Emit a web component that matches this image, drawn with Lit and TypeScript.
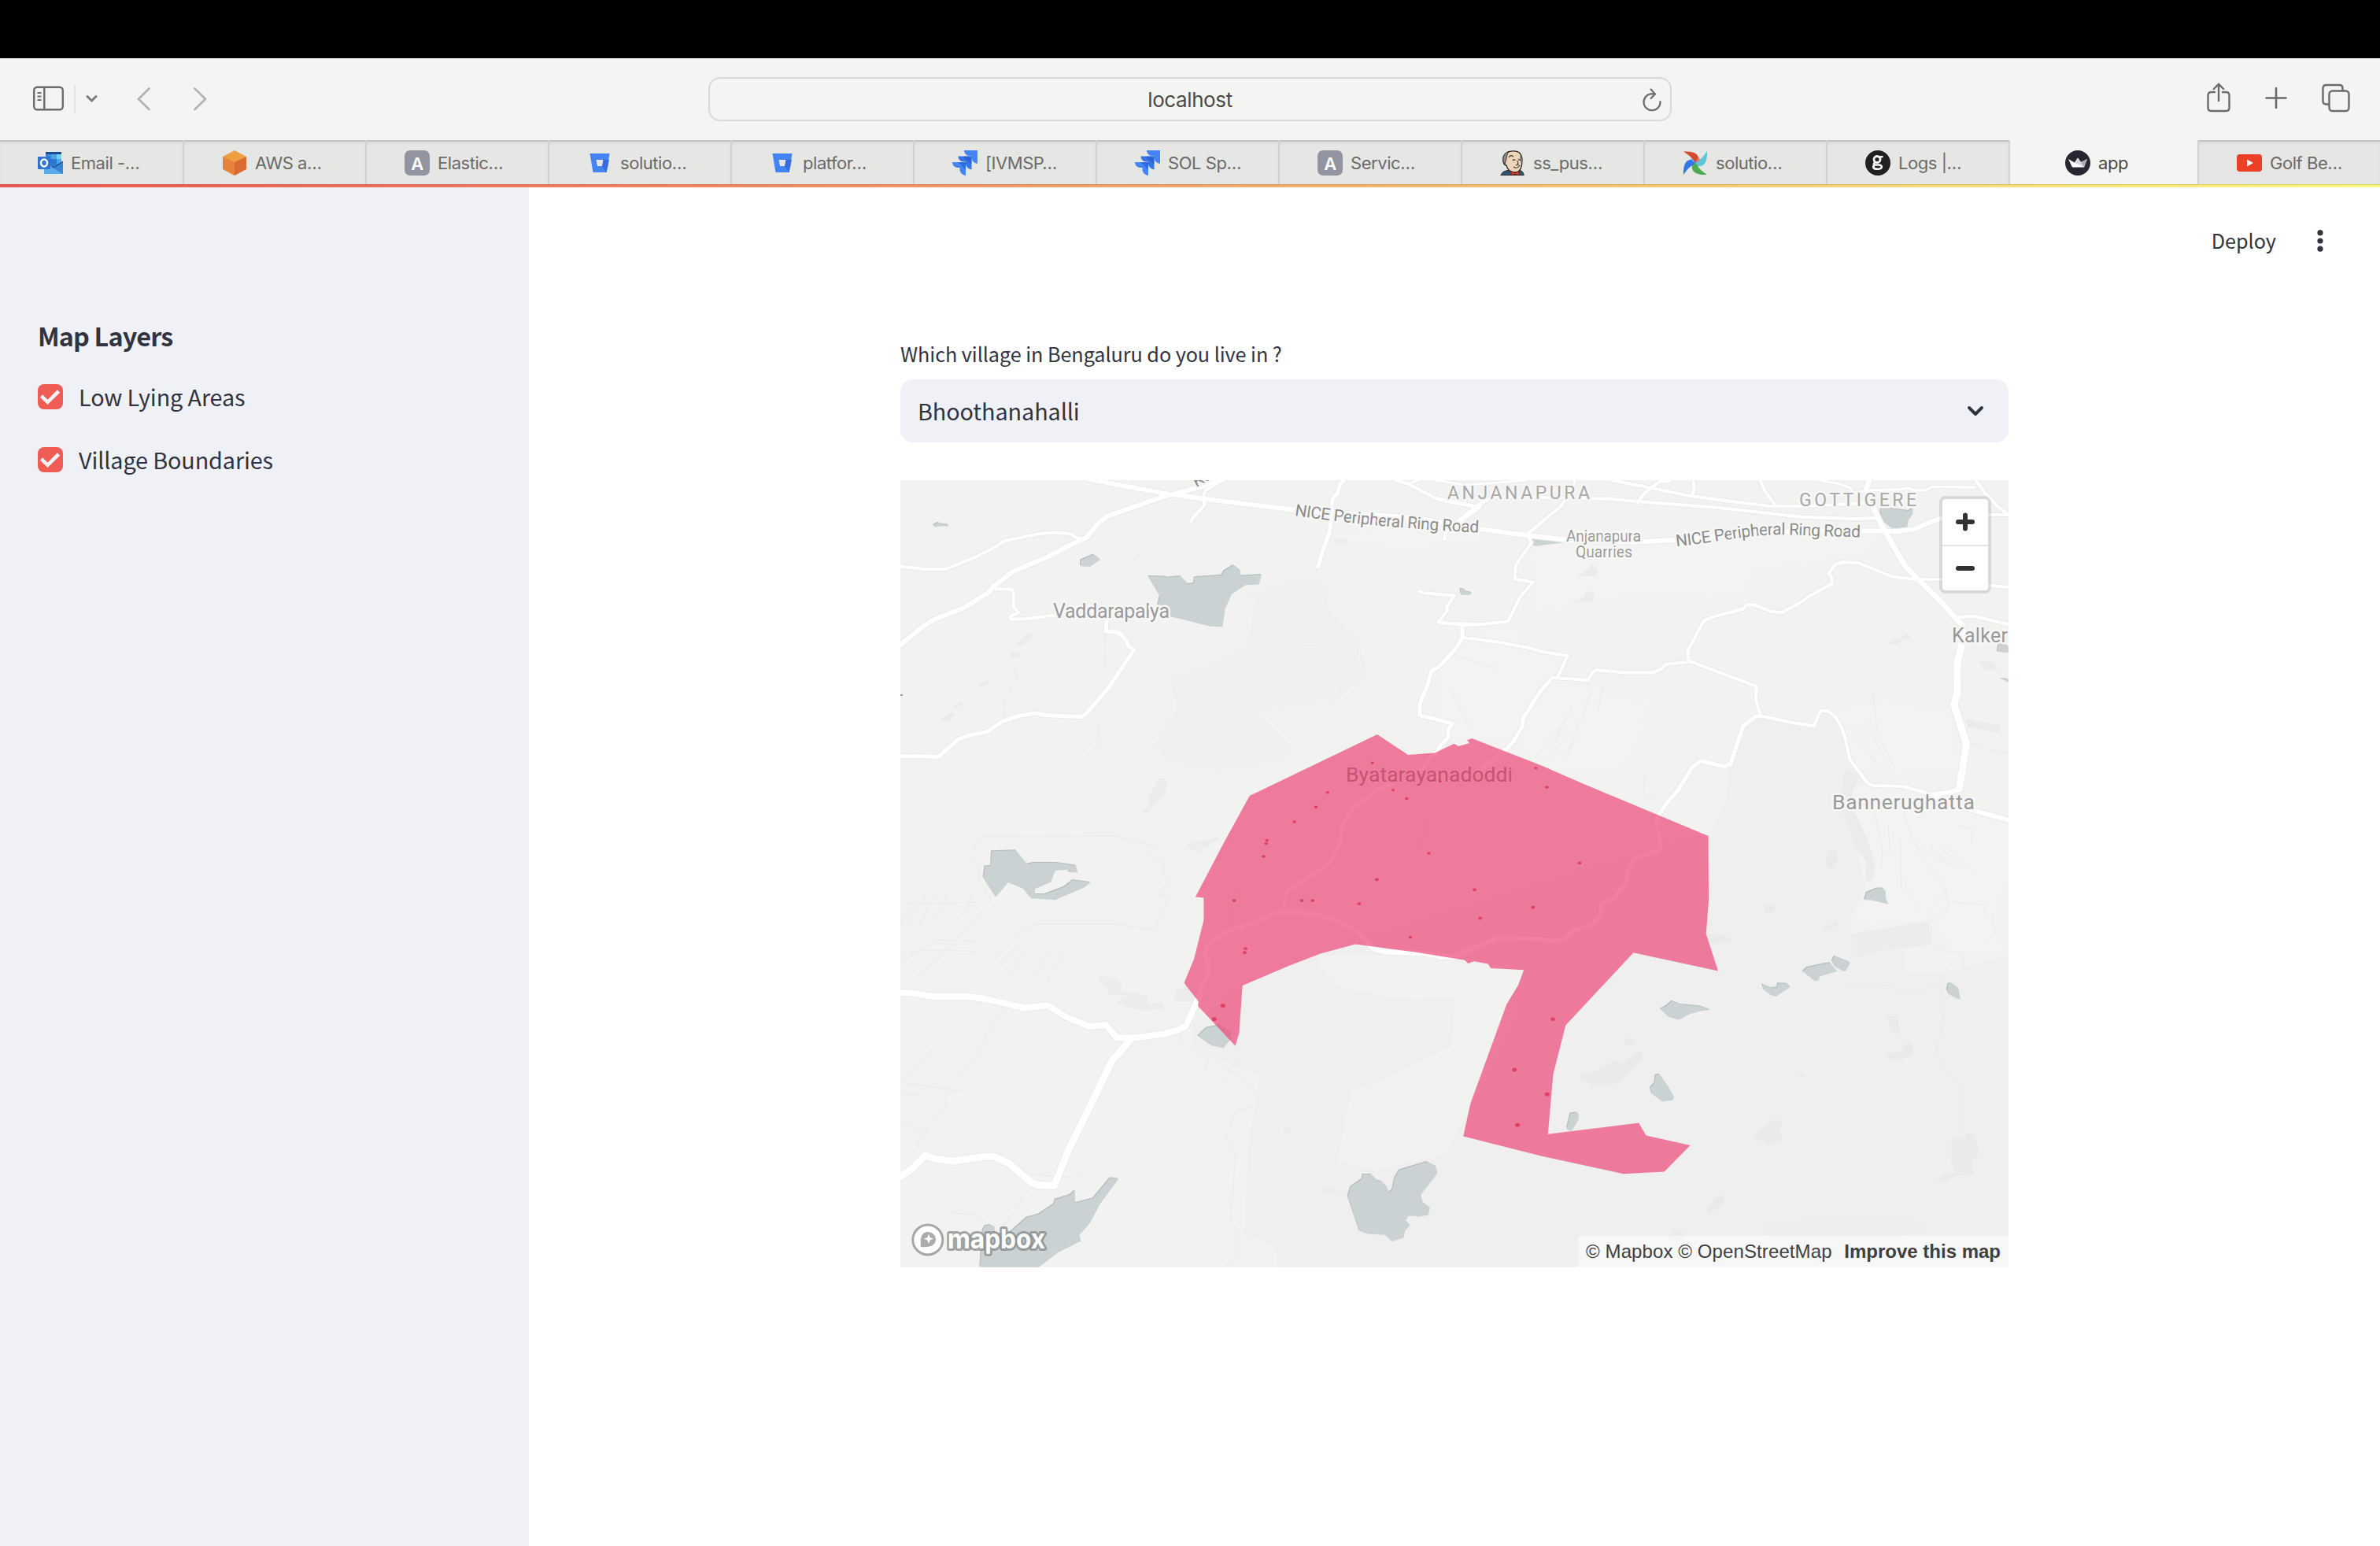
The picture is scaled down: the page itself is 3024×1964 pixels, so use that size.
import { LitElement, html, svg, css } from "lit";
import { customElement, state } from "lit/decorators.js";

/* ---------- map geometry ---------- */

type Quad = "nw" | "ne" | "sw" | "se";

// Each survey sheet has its own grid: [scale x, offset x, scale y, offset y].
const SHEETS: Record<Quad, [number, number, number, number]> = {
  nw: [0.47832, -14, 0.357143, -190],
  ne: [0.47832, 686, 0.357143, -190],
  sw: [0.47832, -14, 0.459184, 310],
  se: [0.47832, 686, 0.459184, 310],
};

const at = (q: Quad, points: string): string => {
  const [sx, ox, sy, oy] = SHEETS[q];
  return points
    .trim()
    .split(/\s+/)
    .map((p) => {
      const [x, y] = p.split(",").map(Number);
      return `${(x * sx + ox).toFixed(1)},${(y * sy + oy).toFixed(1)}`;
    })
    .join(" ");
};

const LAND = [
  { fill: "#efefef", d: at("ne", "848,1370 990,1408 1020,1350 1050,1380 1075,1450 1090,1525 1112,1568") + " " + at("se", "1135,165 1070,160 1070,240 1105,340 1130,450 1092,530 1092,640 1230,625 1240,690 1330,690 1509,640 1509,1502") + " " + at("sw", "1032,1502 1027,1445 945,1410 952,1180 985,972 805,900 805,830 940,720 1240,600 2176,300") + " " + at("se", "755,230 770,110") + " " + at("ne", "805,1400") },
  { fill: "#f2f2f0", d: at("sw", "1140,640 1140,665 1190,725 1320,755 1502,762 1495,890 1225,1022 1190,1210 1290,1235 1475,1190 1530,1090 1660,840 1690,680 1500,640") },
  { fill: "#f0f0ef", d: at("nw", "745,1240 850,1190 950,1120 975,950 940,940 1100,885 1160,905 1165,990 1245,1090 1270,1220 1200,1300 980,1360 1070,1480 1040,1530 870,1568 740,1530 700,1480 765,1340") },
  { fill: "#f3f4f2", d: at("ne", "190,1040 60,1090 0,1200 0,1450 200,1450 300,1568 470,1568 555,1330 480,1310 300,1235 335,1150 220,1120") },
  { fill: "#f3f4f2", d: at("ne", "240,770 250,1000 400,950 800,930 830,850 1130,790 1160,690 400,750") },
  { fill: "#f3f4f2", d: at("ne", "1050,1370 1120,1320 1350,1350 1380,1568 1115,1568") },
  { fill: "#f3f4f2", d: at("se", "1130,170 1370,200 1509,270 1509,430 1460,520 1500,640 1385,632 1305,540 1140,555 1092,530 1130,450 1080,200") },
  { fill: "#f3f4f2", d: at("nw", "1180,730 1350,700 1568,720 1568,760 1350,772 1230,755") },
  { fill: "#ececec", d: at("se", "1092,580 1298,544 1303,610 1150,632 1092,648") },
  { fill: "#eeefed", d: at("se", "850,1390 1000,1362 1250,1362 1300,1400 1180,1425 870,1420") },
  { fill: "#ebeceb", d: at("sw", "735,150 715,150 686,206 690,225 670,244 688,243 735,188") },
  { fill: "#ebeceb", d: at("sw", "790,333 875,312 868,325 815,355") },
  { fill: "#ebeceb", d: at("sw", "554,693 600,702 616,718 615,740 650,740 683,755 687,771 728,772 730,786 676,793 640,785 605,775 612,760 640,750 583,748 578,730 556,712") },
  { fill: "#ebeceb", d: at("sw", "1152,1282 1185,1286 1187,1300 1150,1297") },
  { fill: "#ebeceb", d: at("sw", "1048,1113 1068,1120 1064,1132 1048,1128") },
  { fill: "#ebeceb", d: at("sw", "755,768 765,735 790,722 825,768") },
  { fill: "#eaeaea", d: at("se", "370,963 410,963 458,932 485,937 523,904 538,908 536,926 470,994 412,1001 372,985") },
  { fill: "#eaeaea", d: at("se", "495,868 514,870 512,889 488,889") },
  { fill: "#eaeaea", d: at("se", "833,1136 882,1095 909,1096 901,1130 911,1153 880,1161 850,1153") },
  { fill: "#eaeaea", d: at("se", "1358,1148 1395,1145 1400,1132 1415,1134 1432,1183 1412,1212 1417,1245 1365,1250 1330,1268 1320,1255 1368,1240 1357,1205") },
  { fill: "#eaeaea", d: at("se", "736,1304 755,1305 752,1326 710,1359 708,1338") },
  { fill: "#eaeaea", d: at("se", "620,1396 645,1408 645,1430 605,1430") },
  { fill: "#eaeaea", d: at("se", "1184,808 1213,808 1221,858 1202,855") },
  { fill: "#eaeaea", d: at("se", "1236,884 1255,885 1256,912 1222,929 1185,924 1190,912 1225,905") },
  { fill: "#eaeaea", d: at("se", "1040,345 1053,350 1055,377 1043,400 1025,395 1025,372") },
  { fill: "#ebebeb", d: at("se", "1075,120 1110,150 1095,190 1100,240 1135,320 1155,390 1148,432 1130,436 1132,380 1105,345 1068,240 1070,160") },
  { fill: "#eaeaea", d: at("se", "865,500 885,500 893,510 878,524 862,522") },
  { fill: "#eaeaea", d: at("se", "1050,544 1057,556 1018,574 1016,568") },
  { fill: "#eaeaea", d: at("se", "946,978 960,968 968,974") },
  { fill: "#eaeaea", d: at("se", "655,570 730,582 752,583 778,600 722,608 665,605") },
  { fill: "#ebebea", d: at("ne", "405,828 420,857 412,872 362,876 390,850") },
  { fill: "#ebebea", d: at("ne", "390,925 408,932 408,962 345,970 380,950") },
  { fill: "#ebebea", d: at("ne", "1245,1077 1247,1093 1210,1117 1187,1112 1200,1103") },
  { fill: "#ebebeb", d: at("ne", "1395,1380 1488,1405 1485,1430 1400,1410") },
  { fill: "#ebebeb", d: at("ne", "1430,1175 1470,1180 1482,1208 1445,1210") },
  { fill: "#ebebea", d: at("nw", "367,1075 383,1078 378,1095 350,1123 338,1118") },
  { fill: "#ebebea", d: at("nw", "325,1144 348,1143 345,1158 320,1170") },
  { fill: "#ebebea", d: at("nw", "262,1241 266,1252 240,1268 236,1262") },
  { fill: "#ebebea", d: at("nw", "165,1358 175,1362 158,1390 135,1392 140,1378") },
  { fill: "#ebebea", d: at("nw", "190,1322 197,1328 172,1345 170,1336") },
  { fill: "#ebebea", d: at("nw", "1186,740 1216,742 1216,753 1186,754") },
  { fill: "#ebebea", d: at("nw", "660,800 662,808 645,820 643,816") },
];

const WATER = [
  at("nw", "688,874 734,875 742,878 774,874 793,902 809,899 811,877 883,870 889,855 914,834 932,852 934,873 989,868 982,903 946,905 909,938 892,990 885,1054 850,1051 745,1016 713,978 719,943"),
  at("nw", "508,817 543,797 561,815 533,840 508,838"),
  at("nw", "117,691 130,683 140,688 157,690 155,697 138,695 121,699"),
  at("nw", "1516,919 1527,920 1533,928 1548,932 1541,941 1520,940"),
  at("ne", "232,737 285,740 337,752 250,767 243,745"),
  at("ne", "1170,628 1245,641 1256,628 1255,652 1243,675 1240,705 1205,708 1178,680 1170,660"),
  at("ne", "1483,1113 1509,1122 1509,1146 1480,1142"),
  at("ne", "1489,1238 1509,1240 1509,1252"),
  at("sw", "272,351 336,349 366,387 383,383 445,383 496,391 500,411 475,409 481,402 441,405 429,437 387,455 386,470 413,471 466,450 488,431 535,438 520,451 441,486 377,482 356,455 316,438 283,478 250,424 254,393 270,392"),
  at("sw", "820,863 843,840 880,832 908,853 908,870 888,896 856,889"),
  at("sw", "1218,1306 1226,1280 1256,1258 1258,1246 1281,1246 1295,1262 1308,1265 1322,1280 1327,1296 1336,1288 1343,1255 1355,1234 1428,1211 1452,1224 1456,1243 1412,1301 1417,1323 1436,1338 1432,1358 1402,1363 1398,1360 1378,1361 1372,1373 1383,1387 1370,1401 1366,1421 1336,1431 1317,1413 1270,1410 1249,1402"),
  at("sw", "241,1502 248,1400 254,1388 268,1385 280,1392 280,1410 318,1408 365,1365 398,1355 437,1328 441,1315 480,1302 493,1290 494,1325 541,1312 587,1255 609,1258 560,1327 533,1380 505,1413 509,1430 448,1462 400,1500 398,1502"),
  at("se", "585,788 600,780 616,766 638,775 690,780 717,790 690,794 660,803 634,818 607,810"),
  at("se", "855,719 880,730 895,728 897,717 922,718 930,727 893,753 880,750 860,735"),
  at("se", "963,684 975,673 1035,660 1054,684 1007,698 1006,708 996,711"),
  at("se", "1041,655 1047,642 1061,648 1089,660 1078,682 1070,683 1050,672"),
  at("se", "1346,735 1349,718 1358,717 1376,730 1382,761 1375,760 1352,748"),
  at("se", "1126,486 1133,466 1160,454 1176,454 1183,462 1183,479 1190,498 1145,487"),
  at("se", "558,1006 570,992 571,972 582,968 605,1002 612,1016 621,1031 619,1040 590,1044 562,1022"),
  at("se", "337,1115 346,1077 363,1074 368,1080 367,1095 350,1125 340,1124"),
];

// width in pixels, then the line itself
const ROADS: [number, string][] = [
  [6, at("nw", "530,529 725,578 835,598 1080,638") + " " + at("ne", "-70,665 100,705 230,728 360,748 520,752 627,745 850,715 1114,712 1215,714 1260,706 1300,682 1330,668")],
  [6, at("nw", "900,520 850,548 760,580 725,592 580,660 555,685 525,735 480,763 420,805 325,860 275,912 265,930 200,985 120,1027 92,1050 29,1118")],
  [4, at("nw", "520,742 495,735 480,722 440,718 400,722 305,748 285,768 230,805 150,848 90,848 29,838")],
  [4, at("nw", "275,918 325,920 330,930 330,985 343,1002 320,1018 322,1027 365,1025 440,1012")],
  [5, at("nw", "577,1030 575,1070 605,1073 615,1082 632,1108 633,1122 650,1135 585,1265 525,1360 510,1374 415,1368 390,1361 345,1370 300,1390 260,1427 210,1440 185,1452 130,1516 80,1513 29,1514")],
  [4, at("nw", "885,532 838,570 834,600 838,620 805,668 803,678")],
  [5, at("nw", "1208,532 1198,545 1190,580 1177,600 1170,715 1152,780 1139,840")],
  [4, at("nw", "1345,532 1378,545 1450,595 1568,628")],
  [3, at("nw", "1378,545 1410,530")],
  [3, at("ne", "-10,532 60,548 120,545 230,532")],
  [4, at("ne", "0,602 95,628 130,598 155,590 440,598 560,612 740,630 960,663 1110,670 1165,665")],
  [4, at("nw", "1568,628 1477,718 1475,742")],
  [4, at("ne", "120,600 20,705 10,742")],
  [4, at("ne", "357,532 352,565 320,625 230,725")],
  [4, at("ne", "455,532 570,562 650,585 740,602 880,625 960,625 1140,612")],
  [4, at("ne", "610,535 582,537 545,575 525,610")],
  [4, at("ne", "672,532 675,565 668,588")],
  [4, at("ne", "850,532 862,570 890,622")],
  [3, at("ne", "1005,532 1060,545 1090,560 1095,578 1140,568 1220,565 1240,560 1262,568 1290,568 1305,555 1420,557")],
  [4, at("ne", "1422,532 1445,575 1480,625 1509,655 1450,655")],
  [7, at("ne", "1142,525 1132,560 1140,600 1175,700 1235,838 1270,885 1330,965 1388,1050 1376,1180 1372,1290 1362,1330 1395,1470")],
  [9, at("ne", "1392,1080 1373,1185 1374,1285 1365,1330 1398,1468 1386,1568") + " " + at("se", "1378,180")],
  [6, at("se", "1378,182 1310,196 1370,225 1509,265")],
  [4, at("se", "1310,196 1230,172 1150,170 1135,163 1088,98 1075,35 1062,0") + " " + at("ne", "1050,1375 1030,1352 1012,1352 1005,1365 993,1407 930,1393 850,1370")],
  [4, at("ne", "850,1370 838,1310 840,1265 660,1175 657,1140 700,1032 720,1020 805,990 815,975 832,975 880,1000 907,1003 960,965 980,945 1040,900 1040,880 1032,862 1050,832 1065,824 1110,826 1200,875 1260,885 1330,885")],
  [5, at("ne", "850,1370 838,1373 805,1405 770,1545") + " " + at("se", "768,110 755,117 692,102 670,118 632,182 600,220 582,250")],
  [4, at("ne", "660,1178 600,1187 585,1205 565,1217 490,1217 412,1207 402,1220 392,1243 297,1235")],
  [5, at("ne", "297,1235 262,1290 220,1380 217,1410 195,1460 165,1505 100,1568")],
  [4, at("ne", "312,1232 338,1157 270,1142 230,1127 150,1107 60,1092")],
  [4, at("ne", "235,735 242,755 200,835 198,883 247,895 213,945 180,1035 110,1045 0,1040")],
  [5, at("nw", "1522,1047 1522,1090 1510,1122 1465,1190 1440,1212 1430,1260 1410,1325 1408,1368 1495,1397 1485,1420 1485,1445 1465,1475 1448,1515")],
  [4, at("nw", "1408,928 1420,933 1500,943 1480,985 1482,995 1458,1037 1522,1047 1568,1045")],
  [4, at("ne", "1370,1022 1415,1015 1509,1045")],
  [4, at("ne", "1455,907 1509,912")],
  [6, at("sw", "1448,80 1410,130 1300,180 1228,235 1200,290 1198,325 1170,385 1060,460 1050,490 1050,520")],
  [5, at("se", "170,70 90,135 60,150")],
  [6, at("se", "582,250 573,270 582,310 584,345 515,375 500,400 492,440 465,478 428,497 425,532 400,558 350,572 330,595 300,600 270,595 155,592 80,622 45,640 0,645")],
  [7, at("sw", "820,760 832,720 845,700 848,665 838,630 845,612 890,575 980,545 1020,523 1050,520 1110,523 1170,535 1240,570 1285,620 1320,630 1400,632 1500,645 1568,612")],
  [8, at("sw", "29,743 55,743 115,753 205,753 250,759 360,785 420,778 470,810 530,836 575,832 605,868 645,868 725,858 765,847 788,835 822,755")],
  [9, at("sw", "645,868 592,930 475,1180 438,1277 395,1275 375,1267 320,1217 280,1196 250,1196 170,1209 120,1202 97,1192 60,1230 29,1252")],
];

const TRACKS: string[] = [
  at("sw", "270,470 268,490 140,640 70,700"), at("sw", "250,312 220,345 210,365 240,400 240,430 270,490"),
  at("sw", "29,495 100,497 240,493"), at("sw", "60,495 29,560"), at("sw", "100,465 45,560"), at("sw", "125,465 78,560"), at("sw", "160,462 110,555"), at("sw", "225,465 190,530"),
  at("sw", "30,658 130,598 240,600"), at("sw", "35,640 80,625 240,628"), at("sw", "250,312 600,308 705,340 690,365 735,388 725,405 742,435 712,470 740,480 705,570 590,552 390,552 330,588"),
  at("sw", "370,610 315,700"), at("sw", "350,605 280,690"), at("sw", "465,625 412,725"), at("sw", "330,600 280,650"), at("sw", "430,625 370,720"),
  at("sw", "305,782 260,855 230,920 150,1020 150,1055 72,1165 90,1180"), at("sw", "115,895 70,955 30,985"), at("sw", "29,990 205,1018"), at("sw", "30,1020 90,1030"), at("sw", "29,1102 95,1130"),
  at("sw", "375,1280 310,1380 270,1390 230,1358 160,1350"), at("sw", "380,1245 490,1255 520,1235"), at("sw", "770,860 775,880 830,910 850,920 935,975 982,1035 975,1055 920,1070 895,1135 920,1200 905,1375 920,1390 920,1480 890,1500"),
  at("sw", "850,915 838,955"), at("sw", "885,990 910,950 920,920"),
  at("nw", "330,1190 340,1230 305,1320 305,1400"), at("nw", "560,1400 550,1480 500,1540"), at("nw", "575,1080 570,1200"),
  at("nw", "1100,1120 1230,1125 1250,1100 1230,1220 1170,1340"),
  at("se", "1230,250 1270,350 1340,450 1352,510 1303,545 1303,605 1345,632 1388,632 1388,680"), at("se", "1345,670 1348,690 1330,730 1337,820 1318,900 1348,965 1384,1010 1384,1100 1390,1130"),
  at("se", "1345,455 1290,530"), at("se", "1155,250 1175,350 1170,400"), at("se", "1223,320 1225,455"), at("se", "1190,280 1195,360"), at("se", "1285,345 1350,390"), at("se", "1300,340 1370,400"), at("se", "1325,340 1400,400"), at("se", "1350,345 1415,405"), at("se", "1240,455 1270,510"), at("se", "1355,490 1445,500 1445,530"),
  at("se", "1100,0 1170,130"), at("se", "1130,0 1200,130"), at("se", "1400,50 1450,70 1509,80"), at("se", "1380,280 1415,290 1410,330"), at("se", "1080,715 1200,725 1240,745 1330,725"), at("se", "1465,530 1475,575 1450,605"),
  at("se", "320,10 250,95"), at("se", "350,15 285,100"), at("se", "370,30 320,110"), at("se", "545,130 540,190 570,200"),
  at("ne", "20,1260 80,1420"), at("ne", "50,1160 150,1200"), at("ne", "350,1330 300,1480"), at("ne", "400,1290 340,1500"), at("ne", "430,1260 420,1350"), at("ne", "1080,1400 1150,1530"), at("ne", "1140,1380 1210,1560"), at("ne", "1150,1290 1160,1420"),
  at("se", "378,590 375,650 325,785"), at("sw", "1430,265 1410,330 1430,365"), at("sw", "920,455 900,560"),
];

const VILLAGE =
  at("sw", "1296,28 1378,85 1450,79 1500,54 1512,61 1541,52 1535,44 1548,39") + " " +
  at("se", "84,39 270,115 380,165 712,309 713,490 706,580 738,683 513,632 333,833 300,968 286,1134 527,1103 547,1138 664,1165 595,1238 487,1244 270,1195 61,1140 80,1050 115,950 176,775 207,722 222,680 134,675 127,663 90,656 74,662 65,653") + " " +
  at("sw", "1525,652 1400,631 1238,609 1145,635 1060,669 938,723 929,855 919,890 820,780 821,767 783,716 809,650 835,543 835,480 813,478 890,325 957,198");

const LOW_SPOTS: [Quad, number, number, number][] = [
  ["sw", 1283, 107, 2], ["sw", 1338, 182, 2], ["sw", 1374, 206, 2.2], ["sw", 1164, 189, 2.2], ["sw", 1133, 229, 2.2], ["sw", 1076, 270, 2.2],
  ["sw", 1003, 321, 2.2], ["sw", 1001, 330, 2.2], ["sw", 994, 366, 2.2], ["sw", 1463, 158, 2], ["sw", 1433, 357, 2.2], ["sw", 1295, 430, 2.3],
  ["sw", 1248, 497, 2.3], ["sw", 1124, 488, 2.3], ["sw", 1096, 488, 2.3], ["sw", 916, 488, 2.3], ["sw", 1384, 589, 2.3], ["sw", 946, 621, 2.4],
  ["sw", 944, 632, 2.4], ["sw", 886, 779, 3], ["sw", 863, 816, 3], ["se", 254, 121, 2], ["se", 283, 174, 2.2], ["se", 370, 384, 2.3],
  ["se", 91, 458, 2.3], ["se", 106, 537, 2.5], ["se", 246, 507, 2.5], ["se", 299, 816, 2.8], ["se", 197, 956, 3], ["se", 284, 1024, 3], ["se", 205, 1109, 3],
];

interface Label { text: string; x: number; y: number; w: number; size: number; kind: string }
const LABELS: Label[] = [
  { text: "ANJANAPURA", x: 695, y: 23.6, w: 181, size: 23, kind: "suburb" },
  { text: "GOTTIGERE", x: 1142, y: 33, w: 149, size: 23, kind: "suburb" },
  { text: "Vaddarapalya", x: 194, y: 174.5, w: 148, size: 25, kind: "place" },
  { text: "Kalker", x: 1336, y: 206, w: 71, size: 25, kind: "place" },
  { text: "Anjanapura", x: 846, y: 77.5, w: 95, size: 19.5, kind: "place" },
  { text: "Quarries", x: 858, y: 98, w: 72, size: 19.5, kind: "place" },
  { text: "Bannerughatta", x: 1184, y: 417.5, w: 181, size: 26.5, kind: "place" },
];

@customElement("village-map")
export class VillageMap extends LitElement {
  static styles = css`
    :host { display: block; position: relative; width: 1408px; height: 1000px; overflow: hidden; background: #f2f2f0; }
    .canvas { display: block; width: 1408px; height: 1000px; font-family: "Roboto", "Noto Sans", sans-serif; }
    .water { fill: #cad2d3; }
    .bank { fill: #b4bcbd; }
    .track { fill: none; stroke: #e9ecea; stroke-width: 1; }
    .casing, .road { fill: none; stroke-linecap: round; stroke-linejoin: round; }
    .casing { stroke: #e9ebeb; }
    .road { stroke: #fff; }
    .label { paint-order: stroke; stroke: #f6f6f5; stroke-width: 5px; stroke-linejoin: round; }
    .suburb { fill: #a8a8a8; }
    .place { fill: #999; }
    .covered { fill: #6c6c6c; }
    .highway { fill: #8a8a8a; font-size: 21px; }
    .zone { fill: #ed4777; fill-opacity: 0.7; }
    .spot { fill: #dc3656; fill-opacity: 0.85; }
    .wordmark { font: 700 34px "Inter", "Lato", sans-serif; fill: #fff; stroke: #8a8e8e; stroke-opacity: 0.8; stroke-width: 6px; paint-order: stroke; stroke-linejoin: round; }
    .zoom { position: absolute; top: 24px; right: 26px; width: 58px; background: #fff; border-radius: 4px; box-shadow: 0 0 0 4px rgba(0, 0, 0, 0.1); display: flex; flex-direction: column; }
    .zoom-key { height: 58px; display: grid; place-items: center; }
    .zoom-key + .zoom-key { border-top: 2px solid #e6e6ee; height: 56px; }
    .credits { position: absolute; right: 0; bottom: 0; height: 40px; width: 547px; box-sizing: border-box; padding: 0 10px; display: flex; align-items: center; justify-content: space-between; background: rgba(255, 255, 255, 0.5); color: #404040; font: 24px/40px "Liberation Sans", Arial, sans-serif; white-space: nowrap; }
    .improve { font-weight: 700; }
    .osm { letter-spacing: 0.1px; }
  `;

  render() {
    const highway2 = "M" + at("ne", "627,768") + " C" + at("ne", "740,752 830,722 920,726") + " S" + at("ne", "1050,733 1118,735");
    return html`
      <svg class="canvas" viewBox="0 0 1408 1000">
        ${LAND.map((a) => svg`<polygon points=${a.d} fill=${a.fill}></polygon>`)}
        ${TRACKS.map((t) => svg`<polyline class="track" points=${t}></polyline>`)}
        ${WATER.map((w) => svg`<polygon class="bank" points=${w} transform="translate(-1 -1)"></polygon><polygon class="water" points=${w}></polygon>`)}
        ${ROADS.map(([w, d]) => svg`<polyline class="casing" points=${d} stroke-width=${w + 2}></polyline>`)}
        ${ROADS.map(([w, d]) => svg`<polyline class="road" points=${d} stroke-width=${w}></polyline>`)}
        <text class="label covered" x="566" y="382.5" font-size="26.5" textLength="212">Byatarayanadoddi</text>
        <polygon class="zone" points=${VILLAGE}></polygon>
        ${LOW_SPOTS.map(([q, x, y, r]) => {
          const [cx, cy] = at(q, `${x},${y}`).split(",");
          return svg`<ellipse class="spot" cx=${cx} cy=${cy} rx=${r} ry=${r * 0.8}></ellipse>`;
        })}
        ${LABELS.map((l) => svg`<text class="label ${l.kind}" x=${l.x} y=${l.y} font-size=${l.size} textLength=${l.w}>${l.text}</text>`)}
        <path id="ring-a" d="M501,45 Q600,60 740,67" fill="none"></path>
        <path id="ring-b" d=${highway2} fill="none"></path>
        <text class="label highway" textLength="235"><textPath href="#ring-a" textLength="235">NICE Peripheral Ring Road</textPath></text>
        <text class="label highway" textLength="235"><textPath href="#ring-b" textLength="235">NICE Peripheral Ring Road</textPath></text>
        <text class="label highway" transform="translate(376 9) rotate(-30)">Kanakapura</text>
        <rect x="0" y="272" width="3" height="2" fill="#999"></rect>
        <circle cx="34.8" cy="965" r="19" fill="#fff" stroke="#a5a8a8" stroke-width="3"></circle>
        <path d="M26 974 C25 964 26 956 34 955 C40 954.500 45 959 45 965 C44 973 36 975 26 974Z" fill="#a9abab"></path>
        <path d="M36 957.500 L37.700 962 L42 963.700 L37.700 965.400 L36 970 L34.300 965.400 L30 963.700 L34.300 962Z" fill="#fff"></path>
        <text class="wordmark" x="60" y="975.5" textLength="124" lengthAdjust="spacingAndGlyphs">mapbox</text>
      </svg>
      <div class="zoom">
        <span class="zoom-key"><svg width="26" height="26" viewBox="0 0 26 26"><path d="M13 4.500V21.500M4 13H22" stroke="#333" stroke-width="6" stroke-linecap="round"></path></svg></span>
        <span class="zoom-key"><svg width="26" height="26" viewBox="0 0 26 26"><path d="M4 13H22" stroke="#333" stroke-width="6" stroke-linecap="round"></path></svg></span>
      </div>
      <div class="credits"><span class="osm">© Mapbox © OpenStreetMap</span><span class="improve">Improve this map</span></div>
    `;
  }
}

/* ---------- browser tabs ---------- */

const letterA = svg`<rect width="32" height="32" rx="7" fill="#9294a1"></rect><text x="16" y="24.500" text-anchor="middle" font-family="Inter, sans-serif" font-size="22" font-weight="600" fill="#fff">A</text>`;
const bucket = svg`<path d="M3.500 4H28.500L24.500 28H7.500Z" fill="#4484f6"></path><path d="M13 12H28L26.500 20L24.500 28L19 20Z" fill="#2456c9" opacity=".75"></path><path d="M11.500 12H20.500L19 20H13Z" fill="#e6e6e4"></path><path d="M3.500 4H28.500L24.500 28H20L20.500 12H11.500L8 27Z" fill="#4484f6" opacity=".35"></path>`;
const jira = svg`<path d="M15 0H32V17C27 16 24.500 13 24.500 9V7H22C18 7 15 4 15 0Z" fill="#4484f6"></path><path d="M7.500 7.500H24.500V24.500C20 23.500 17 20.500 17 16.500V14.500H14.500C10.500 14.500 7.500 11.500 7.500 7.500Z" fill="#3874e8"></path><path d="M15 7.500H24.500V17L15 10Z" fill="#2358cc" opacity=".6"></path><path d="M0 15H17V32C12.500 31 9.500 28 9.500 24V22H7C3 22 0 19 0 15Z" fill="#4484f6"></path><path d="M8 15H17V25Z" fill="#2358cc" opacity=".6"></path>`;

const ICONS = {
  outlook: svg`<rect x="10" y="2" width="20" height="18" fill="#2f78d0"></rect><rect x="10" y="2" width="20" height="3" fill="#1d4c94"></rect><rect x="17" y="5" width="7" height="6" fill="#4ba3e8"></rect><rect x="24" y="5" width="6" height="7" fill="#75d4fb"></rect><rect x="10" y="5" width="7" height="6" fill="#3a87dc"></rect><rect x="24" y="11" width="6" height="6" fill="#4ba3e8"></rect><path d="M8 17L20 22L32 15V30H8Z" fill="#57ace9"></path><path d="M32 15V30L17 21Z" fill="#3d85d4"></path><path d="M17 20L21 21L32 13.500V15L21 22L17 21Z" fill="#173e7c"></path><rect x="0" y="8" width="16" height="16" rx="1" fill="#2f74cf"></rect><ellipse cx="8" cy="16" rx="4" ry="4.500" fill="none" stroke="#fff" stroke-width="2.500"></ellipse>`,
  aws: svg`<path d="M16 0L31 8L16 16L1 8Z" fill="#f09e42"></path><path d="M1 8L16 15V32L1 24Z" fill="#e6823a"></path><path d="M31 8L16 15V32L31 24Z" fill="#dc6833"></path>`,
  letterA, bucket, jira,
  butler: svg`<path d="M1 32C2 27 7 26 12 25L24 25C28 26 30 28 30 32Z" fill="#33536b" stroke="#222" stroke-width="1"></path><path d="M4 13C3 5 9 .8 17 .8C25 .8 28 6 28 13C28 20 26 28 19 28C13 28 9 24 8 19C5 19 4 16 4 13Z" fill="#edd5b8" stroke="#2b2622" stroke-width="1.300"></path><path d="M4 14C3 7 6 3 11 1.500C8 6 9 9 7 14L6 18Z" fill="#8d8a88" stroke="#2b2622" stroke-width=".8"></path><path d="M25 6C28 9 28 13 27 17L25 11Z" fill="#8d8a88"></path><path d="M11 9C13 6 15 6 17 8M16 13C17 11 19 12 19 13M23 12C24 11 25 12 26 13M22 13L23 18L20 19M17 21C20 23 22 23 25 19" fill="none" stroke="#3a2d25" stroke-width="1.200"></path><path d="M14 26.500L19 28.500L24 26.500V32L19 30L14 32Z" fill="#d63c34" stroke="#5a1c1a" stroke-width=".8"></path>`,
  pinwheel: svg`<path d="M1 1.500C12 1 22 3 20 14L15 16C12 9 8 6 1 1.500Z" fill="#d4492f"></path><path d="M31 1C31.500 12 29 22 18 20L16 15C23 12 26 8 31 1Z" fill="#5cc6d4"></path><path d="M31 31C20 31.500 10 29 12 18L17 16C20 23 24 26 31 31Z" fill="#4fab52"></path><path d="M1 31C.5 20 3 10 14 12L16 17C9 20 6 24 1 31Z" fill="#3476e4"></path><path d="M15 16L9 10.500L14 12ZM16 16L22 10L20 15Z" fill="#5cb5f5"></path><path d="M16 16L20 8L21.500 12Z" fill="#ee7058"></path>`,
  gLogs: svg`<circle cx="16" cy="16" r="16" fill="#222021"></circle><circle cx="15" cy="11.500" r="4" fill="none" stroke="#fff" stroke-width="2.800"></circle><path d="M18 8.500L22.500 8M12 15.500C9.500 18.500 11 18.500 17 18.500C22 18.500 22.500 23.800 15.500 23.800C9 23.800 9.500 20 12 19" fill="none" stroke="#fff" stroke-width="2.600"></path>`,
  crown: svg`<circle cx="16" cy="16" r="16" fill="#262730"></circle><path d="M4 11L12 15.500L16 9.500L20 15L28 11L24 21.500H9Z" fill="#fff"></path><path d="M12 15.500L16 9.500L20 15L24 21.500Z" fill="#d9d9dc"></path><path d="M20 15L28 11L24 21.500Z" fill="#a9aaaf"></path>`,
  youtube: svg`<rect x="0" y="5" width="32" height="22" rx="4" fill="#eb4026"></rect><path d="M13 11.500L21 16L13 20.500Z" fill="#fff"></path>`,
};

interface Tab { icon: keyof typeof ICONS; title: string; active?: boolean }
const TABS: Tab[] = [
  { icon: "outlook", title: "Email -…" },
  { icon: "aws", title: "AWS a…" },
  { icon: "letterA", title: "Elastic…" },
  { icon: "bucket", title: "solutio…" },
  { icon: "bucket", title: "platfor…" },
  { icon: "jira", title: "[IVMSP…" },
  { icon: "jira", title: "SOL Sp…" },
  { icon: "letterA", title: "Servic…" },
  { icon: "butler", title: "ss_pus…" },
  { icon: "pinwheel", title: "solutio…" },
  { icon: "gLogs", title: "Logs |…" },
  { icon: "crown", title: "app", active: true },
  { icon: "youtube", title: "Golf Be…" },
];

@customElement("browser-chrome")
export class BrowserChrome extends LitElement {
  static styles = css`
    :host { display: block; font-family: "Inter", "Liberation Sans", sans-serif; }
    .bezel { height: 74px; background: #000; }
    .toolbar { height: 104px; background: #f4f4f2; display: grid; grid-template-columns: 900px 1224px 900px; }
    .left, .right { display: flex; align-items: flex-start; }
    .left { padding: 34px 0 0 42px; }
    .divider { width: 2px; height: 36px; margin: 0 13px; background: #e4e4e2; }
    .back { margin-left: 50px; }
    .forward { margin-left: 55px; }
    .right { justify-content: flex-end; padding: 31px 38px 0 0; }
    .plus { margin: 0 44px 0 44px; }
    .address { box-sizing: border-box; height: 56px; margin-top: 24px; border: 2px solid #d8d8d6; border-radius: 15px; display: grid; grid-template-columns: 1fr auto 1fr; align-items: center; color: #4a4a48; font-size: 26px; letter-spacing: -0.4px; }
    .host { grid-column: 2; line-height: 52px; padding-top: 1px; }
    .reload { justify-self: end; margin-right: 9px; }
    .tabs { height: 56px; display: flex; background: #e6e6e4; }
    .tab { box-sizing: border-box; width: 232px; padding: 1px 0 0 48px; border-left: 2px solid #d2d2d0; display: flex; align-items: center; gap: 10px; color: #6a6a68; font-size: 22px; letter-spacing: -0.45px; white-space: nowrap; box-shadow: inset 0 2px 0 #c3c3c1, inset 0 5px 4px -2px #d6d6d4; }
    .tab:first-child { border-left: 0; }
    .tab.active { width: 240px; padding-left: 70px; background: #f4f4f2; color: #4a4a48; box-shadow: none; }
    .favicon { flex: none; width: 32px; height: 32px; }
    .accent { height: 4px; background: linear-gradient(rgba(60, 40, 0, 0.18) 0 1px, transparent 1px), linear-gradient(90deg, #ed5452, #f4b06c 55%, #fbf97e); }
  `;

  render() {
    return html`
      <div class="bezel"></div>
      <div class="toolbar">
        <div class="left">
          <svg width="39" height="36" viewBox="0 0 39 36" fill="none" stroke="#6b6b69" stroke-width="2.400"><rect x="1.200" y="2.700" width="36.600" height="28.600" rx="4"></rect><path d="M14.300 2.700V31.300"></path><path d="M5.500 10H10.500M5.500 14.500H10.500M5.500 19H10.500" stroke-width="1.800"></path></svg>
          <span class="divider"></span>
          <svg width="15" height="36" viewBox="0 0 15 36" fill="none" stroke="#7b7b80" stroke-width="3" stroke-linecap="round" stroke-linejoin="round"><path d="M2 14.500L7.500 20L13 14.500"></path></svg>
          <svg class="back" width="17" height="36" viewBox="0 0 17 36" fill="none" stroke="#b2b2b0" stroke-width="2.700" stroke-linecap="round" stroke-linejoin="round"><path d="M15.500 4.500L2 17.800L15.500 31"></path></svg>
          <svg class="forward" width="17" height="36" viewBox="0 0 17 36" fill="none" stroke="#b2b2b0" stroke-width="2.700" stroke-linecap="round" stroke-linejoin="round"><path d="M1.500 4.500L15 17.800L1.500 31"></path></svg>
        </div>
        <div class="address">
          <span class="host">localhost</span>
          <svg class="reload" width="28" height="32" viewBox="0 0 28 32" fill="none" stroke="#6e6e6c" stroke-width="2.200" stroke-linecap="round" stroke-linejoin="round"><path d="M24.500 18A10.500 10.500 0 1 1 14 8.200L17.500 8.400"></path><path d="M12.500 2.500L18 8.400L12.500 14"></path></svg>
        </div>
        <div class="right">
          <svg width="30" height="38" viewBox="0 0 30 38" fill="none" stroke="#6b6b69" stroke-width="2.400" stroke-linecap="round" stroke-linejoin="round"><path d="M10 12H5.500Q1.500 12 1.500 16V32Q1.500 36 5.500 36H24.500Q28.500 36 28.500 32V16Q28.500 12 24.500 12H20M15 23V1.800M8.800 8L15 1.800L21.200 8"></path></svg>
          <svg class="plus" width="28" height="38" viewBox="0 0 28 38" fill="none" stroke="#6b6b69" stroke-width="2.600" stroke-linecap="round"><path d="M14 7V32M1.500 19.500H26.500"></path></svg>
          <svg width="36" height="38" viewBox="0 0 36 38" fill="none" stroke="#6b6b69" stroke-width="2.400" stroke-linejoin="round"><path d="M9 27.500H5.500Q1.500 27.500 1.500 23.500V7Q1.500 3 5.500 3H22.500Q26.500 3 26.500 7V10.500"></path><rect x="9.500" y="10.500" width="25" height="25.500" rx="4"></rect></svg>
        </div>
      </div>
      <div class="tabs">
        ${TABS.map((t) => html`<div class="tab ${t.active ? "active" : ""}"><svg class="favicon" viewBox="0 0 32 32">${ICONS[t.icon]}</svg><span>${t.title}</span></div>`)}
      </div>
      <div class="accent"></div>
    `;
  }
}

/* ---------- page ---------- */

@customElement("app-root")
export class AppRoot extends LitElement {
  @state() private layers = ["Low Lying Areas", "Village Boundaries"];
  @state() private village = "Bhoothanahalli";

  static styles = css`
    :host { display: block; width: 3024px; height: 1964px; overflow: hidden; background: #fff; color: #31333f; font-family: "Noto Sans CJK SC", "Noto Sans", sans-serif; }
    .page { display: grid; grid-template-columns: 672px 1fr; height: 1726px; }
    .sidebar { background: #f0f1f6; padding: 164px 48px 0; box-sizing: border-box; }
    .title { margin: 0; height: 48px; font-size: 32.4px; line-height: 48px; font-weight: 700; letter-spacing: -0.85px; }
    .layer { display: flex; align-items: center; gap: 20px; height: 48px; margin-top: 30px; font-size: 28.8px; line-height: 48px; letter-spacing: -0.13px; }
    .layer + .layer { margin-top: 32px; }
    .check { flex: none; width: 32px; height: 32px; }
    .main { display: flex; flex-direction: column; }
    .header { height: 136px; display: flex; justify-content: flex-end; align-items: center; gap: 50px; padding-right: 70px; box-sizing: border-box; font-size: 25.2px; }
    .deploy { padding-bottom: 2px; }
    .body { padding: 55px 472px 0; }
    .question { height: 40px; font-size: 25.2px; line-height: 40px; letter-spacing: -0.06px; }
    .select { box-sizing: border-box; height: 80px; margin: 13px 0 48px; padding: 0 30px 0 22px; border-radius: 16px; background: #f0f1f6; display: flex; align-items: center; justify-content: space-between; font-size: 28.8px; line-height: 80px; letter-spacing: -0.1px; }
  `;

  render() {
    return html`
      <browser-chrome></browser-chrome>
      <div class="page">
        <aside class="sidebar">
          <h3 class="title">Map Layers</h3>
          ${this.layers.map((name) => html`
            <label class="layer">
              <svg class="check" viewBox="0 0 32 32"><rect width="32" height="32" rx="8" fill="#ee5c54"></rect><path d="M4.500 15L12.500 22.800L26.500 9" fill="none" stroke="#f4f4f6" stroke-width="4.600"></path></svg>
              <span>${name}</span>
            </label>`)}
        </aside>
        <main class="main">
          <div class="header">
            <span class="deploy">Deploy</span>
            <svg width="12" height="32" viewBox="0 0 12 32" fill="#31333f"><circle cx="6" cy="5.700" r="3.600"></circle><circle cx="6" cy="16" r="3.600"></circle><circle cx="6" cy="26.200" r="3.600"></circle></svg>
          </div>
          <div class="body">
            <div class="question">Which village in Bengaluru do you live in ?</div>
            <div class="select">
              <span>${this.village}</span>
              <svg width="24" height="24" viewBox="0 0 24 24" fill="none" stroke="#31333f" stroke-width="4" stroke-linecap="round" stroke-linejoin="round"><path d="M4 8L12 16L20 8"></path></svg>
            </div>
            <village-map></village-map>
          </div>
        </main>
      </div>
    `;
  }
}
